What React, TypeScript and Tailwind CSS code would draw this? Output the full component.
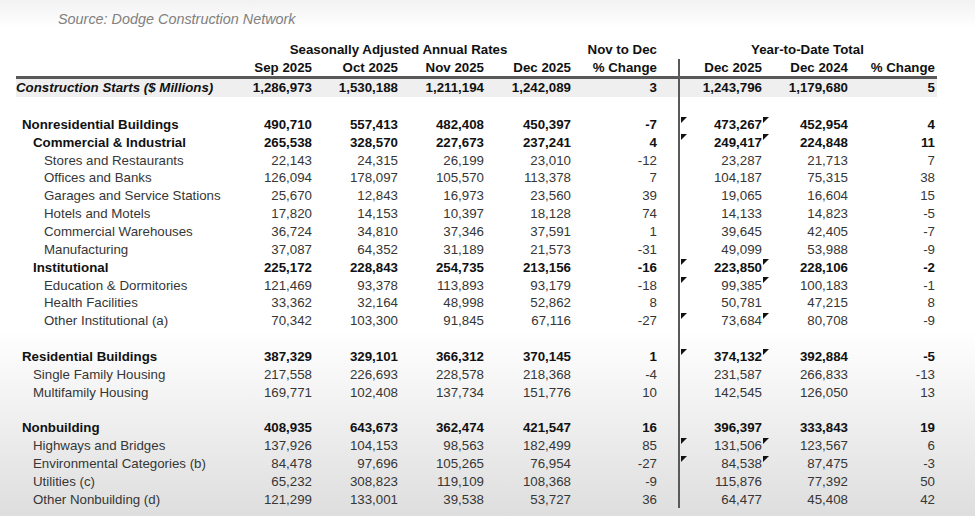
type Level = 0 | 1 | 2

type Line = {
  label: string
  level: Level
  bold?: boolean
  sa: string[]
  pct: string
  ytd: string
  prev: string
  ytdPct: string
  marks?: boolean
}

const rows: (Line | null)[] = [
  { label: 'Nonresidential Buildings', level: 0, bold: true, sa: ['490,710', '557,413', '482,408', '450,397'], pct: '-7', ytd: '473,267', prev: '452,954', ytdPct: '4', marks: true },
  { label: 'Commercial & Industrial', level: 1, bold: true, sa: ['265,538', '328,570', '227,673', '237,241'], pct: '4', ytd: '249,417', prev: '224,848', ytdPct: '11', marks: true },
  { label: 'Stores and Restaurants', level: 2, sa: ['22,143', '24,315', '26,199', '23,010'], pct: '-12', ytd: '23,287', prev: '21,713', ytdPct: '7' },
  { label: 'Offices and Banks', level: 2, sa: ['126,094', '178,097', '105,570', '113,378'], pct: '7', ytd: '104,187', prev: '75,315', ytdPct: '38' },
  { label: 'Garages and Service Stations', level: 2, sa: ['25,670', '12,843', '16,973', '23,560'], pct: '39', ytd: '19,065', prev: '16,604', ytdPct: '15' },
  { label: 'Hotels and Motels', level: 2, sa: ['17,820', '14,153', '10,397', '18,128'], pct: '74', ytd: '14,133', prev: '14,823', ytdPct: '-5' },
  { label: 'Commercial Warehouses', level: 2, sa: ['36,724', '34,810', '37,346', '37,591'], pct: '1', ytd: '39,645', prev: '42,405', ytdPct: '-7' },
  { label: 'Manufacturing', level: 2, sa: ['37,087', '64,352', '31,189', '21,573'], pct: '-31', ytd: '49,099', prev: '53,988', ytdPct: '-9' },
  { label: 'Institutional', level: 1, bold: true, sa: ['225,172', '228,843', '254,735', '213,156'], pct: '-16', ytd: '223,850', prev: '228,106', ytdPct: '-2', marks: true },
  { label: 'Education & Dormitories', level: 2, sa: ['121,469', '93,378', '113,893', '93,179'], pct: '-18', ytd: '99,385', prev: '100,183', ytdPct: '-1', marks: true },
  { label: 'Health Facilities', level: 2, sa: ['33,362', '32,164', '48,998', '52,862'], pct: '8', ytd: '50,781', prev: '47,215', ytdPct: '8' },
  { label: 'Other Institutional (a)', level: 2, sa: ['70,342', '103,300', '91,845', '67,116'], pct: '-27', ytd: '73,684', prev: '80,708', ytdPct: '-9', marks: true },
  null,
  { label: 'Residential Buildings', level: 0, bold: true, sa: ['387,329', '329,101', '366,312', '370,145'], pct: '1', ytd: '374,132', prev: '392,884', ytdPct: '-5', marks: true },
  { label: 'Single Family Housing', level: 1, sa: ['217,558', '226,693', '228,578', '218,368'], pct: '-4', ytd: '231,587', prev: '266,833', ytdPct: '-13' },
  { label: 'Multifamily Housing', level: 1, sa: ['169,771', '102,408', '137,734', '151,776'], pct: '10', ytd: '142,545', prev: '126,050', ytdPct: '13' },
  null,
  { label: 'Nonbuilding', level: 0, bold: true, sa: ['408,935', '643,673', '362,474', '421,547'], pct: '16', ytd: '396,397', prev: '333,843', ytdPct: '19' },
  { label: 'Highways and Bridges', level: 1, sa: ['137,926', '104,153', '98,563', '182,499'], pct: '85', ytd: '131,506', prev: '123,567', ytdPct: '6', marks: true },
  { label: 'Environmental Categories (b)', level: 1, sa: ['84,478', '97,696', '105,265', '76,954'], pct: '-27', ytd: '84,538', prev: '87,475', ytdPct: '-3', marks: true },
  { label: 'Utilities (c)', level: 1, sa: ['65,232', '308,823', '119,109', '108,368'], pct: '-9', ytd: '115,876', prev: '77,392', ytdPct: '50' },
  { label: 'Other Nonbuilding (d)', level: 1, sa: ['121,299', '133,001', '39,538', '53,727'], pct: '36', ytd: '64,477', prev: '45,408', ytdPct: '42' },
]

const grid = 'grid grid-cols-[210px_86px_86px_86px_87px_86px_21px_84px_86px_89px] items-center'
const indent = { 0: 'pl-[6px]', 1: 'pl-[17px]', 2: 'pl-[28px]' }

function Mark({ className }: { className: string }) {
  return (
    <svg width="6" height="6" viewBox="0 0 6 6" className={`absolute ${className}`}>
      <polygon points="0,0 6,0 0,6" fill="#111" />
    </svg>
  )
}

function YtdCell({ children, marks }: { children?: React.ReactNode; marks?: boolean }) {
  return (
    <div className="relative h-full flex items-center justify-end border-l-2 border-[#595959]">
      {marks && <Mark className="left-[1px] top-[1px]" />}
      {children}
      {marks && <Mark className="right-[-7px] top-[1px]" />}
    </div>
  )
}

function Row({ r, tall }: { r: Line | null; tall?: boolean }) {
  if (!r) {
    return (
      <div className={`${grid} ${tall ? 'h-[18.5px]' : 'h-[17.86px]'}`}>
        <div /><div /><div /><div /><div /><div /><div />
        <YtdCell />
      </div>
    )
  }
  const tone = r.bold ? 'font-bold text-[#111]' : 'text-[#363636]'
  return (
    <div className={`${grid} h-[17.86px] ${tone}`}>
      <div className={`${indent[r.level]} whitespace-nowrap`}>{r.label}</div>
      {r.sa.map((v, i) => <div key={i} className="text-right">{v}</div>)}
      <div className="text-right">{r.pct}</div>
      <div />
      <YtdCell marks={r.marks}>{r.ytd}</YtdCell>
      <div className="text-right">{r.prev}</div>
      <div className="text-right pr-[2px]">{r.ytdPct}</div>
    </div>
  )
}

export default function App() {
  return (
    <div className="w-[975px] h-[516px] overflow-hidden bg-[linear-gradient(to_bottom,#f2f2f2_0px,#ffffff_28px,#ffffff_330px,#dedede_516px)] font-['Liberation_Sans',Arial,sans-serif] text-[13.3px] leading-none">
      <p className="pt-[12px] pl-[58px] h-[28px] italic text-[14.4px] text-[#808080]">Source: Dodge Construction Network</p>

      <div className="pl-[16px] pt-[13px]">
        <div className={`${grid} h-[18px] font-bold text-[#111]`}>
          <div />
          <div className="col-span-4 text-center">Seasonally Adjusted Annual Rates</div>
          <div className="text-right">Nov to Dec</div>
          <div />
          <div className="col-span-3 text-center">Year-to-Date Total</div>
        </div>
        <div className={`${grid} h-[17px] font-bold text-[#111]`}>
          <div />
          <div className="text-right">Sep 2025</div>
          <div className="text-right">Oct 2025</div>
          <div className="text-right">Nov 2025</div>
          <div className="text-right">Dec 2025</div>
          <div className="text-right">% Change</div>
          <div />
          <YtdCell>Dec 2025</YtdCell>
          <div className="text-right">Dec 2024</div>
          <div className="text-right pr-[2px]">% Change</div>
        </div>
        <div className="h-[3px] w-[921px] bg-[#595959]" />
        <div className={`${grid} h-[18px] w-[921px] bg-[#efefef] font-bold text-[#111]`}>
          <div className="italic whitespace-nowrap">Construction Starts ($ Millions)</div>
          <div className="text-right">1,286,973</div>
          <div className="text-right">1,530,188</div>
          <div className="text-right">1,211,194</div>
          <div className="text-right">1,242,089</div>
          <div className="text-right">3</div>
          <div />
          <YtdCell>1,243,796</YtdCell>
          <div className="text-right">1,179,680</div>
          <div className="text-right pr-[2px]">5</div>
        </div>
        <Row r={null} tall />
        {rows.map((r, i) => <Row key={i} r={r} />)}
      </div>
    </div>
  )
}
